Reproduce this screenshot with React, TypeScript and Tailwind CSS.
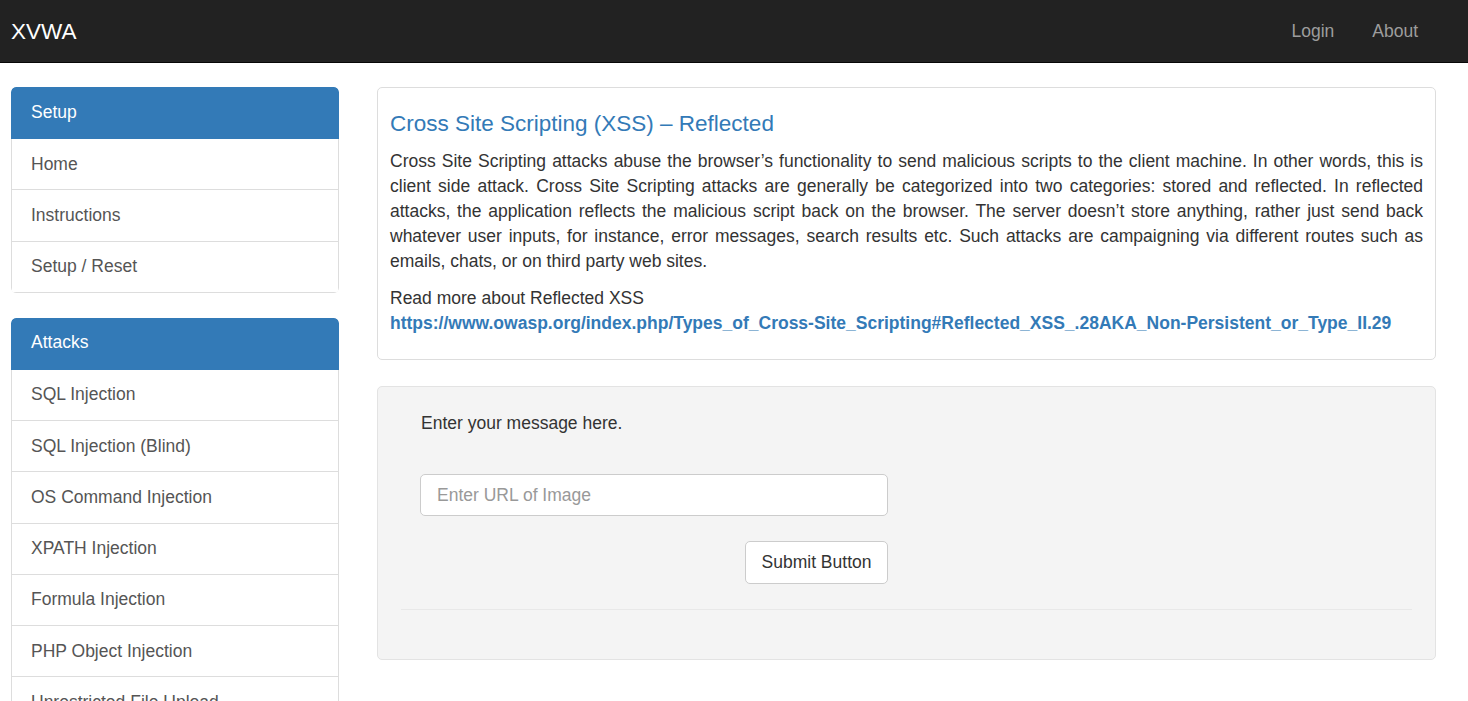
import React from "react";

const setupItems = ["Home", "Instructions", "Setup / Reset"];
const attackItems = [
  "SQL Injection",
  "SQL Injection (Blind)",
  "OS Command Injection",
  "XPATH Injection",
  "Formula Injection",
  "PHP Object Injection",
  "Unrestricted File Upload",
  "Reflected XSS",
];

function SidePanel({ title, items }: { title: string; items: string[] }) {
  return (
    <div className="rounded-[5px] overflow-hidden">
      <div className="h-[52px] bg-[#337ab7] text-white flex items-center pl-[20px] pb-[2px] text-[17.5px] rounded-t-[5px]">
        {title}
      </div>
      <div className="border-x border-[#dddddd] rounded-b-[5px]">
        {items.map((it) => (
          <div
            key={it}
            className="h-[51.25px] border-b border-[#dddddd] flex items-center pl-[19px] text-[#555555] text-[17.5px] bg-white"
          >
            {it}
          </div>
        ))}
      </div>
    </div>
  );
}

export default function App() {
  return (
    <div
      className="min-h-screen bg-white text-[#333333] text-[17.5px] leading-[25px]"
      style={{ fontFamily: '"Liberation Sans", Arial, Helvetica, sans-serif' }}
    >
      <nav className="h-[63px] bg-[#222222] border-b border-[#080808] flex items-center justify-between pl-[11px] pr-[50px]">
        <span className="text-white text-[22.5px] leading-[25px]">XVWA</span>
        <div className="flex gap-[38px] text-[#9d9d9d] text-[17.5px]">
          <span>Login</span>
          <span>About</span>
        </div>
      </nav>

      <div className="flex pl-[11px] pt-[24px]">
        <div className="w-[328px] flex flex-col gap-[25px]">
          <SidePanel title="Setup" items={setupItems} />
          <SidePanel title="Attacks" items={attackItems} />
        </div>

        <div className="w-[1059px] ml-[38px] flex flex-col gap-[26px]">
          <div className="border border-[#dddddd] rounded-[5px] bg-white px-[12px] pt-[23px] h-[273px]">
            <h3 className="text-[#337ab7] text-[22.5px] leading-[25px]">
              Cross Site Scripting (XSS) – Reflected
            </h3>
            <p className="mt-[13px] text-justify">
              Cross Site Scripting attacks abuse the browser’s functionality to send malicious scripts to the client machine. In other words, this is client side attack. Cross Site Scripting attacks are generally be categorized into two categories: stored and reflected. In reflected attacks, the application reflects the malicious script back on the browser. The server doesn’t store anything, rather just send back whatever user inputs, for instance, error messages, search results etc. Such attacks are campaigning via different routes such as emails, chats, or on third party web sites.
            </p>
            <p className="mt-[12px]">Read more about Reflected XSS</p>
            <p className="font-bold text-[#337ab7]">
              https://www.owasp.org/index.php/Types_of_Cross-Site_Scripting#Reflected_XSS_.28AKA_Non-Persistent_or_Type_II.29
            </p>
          </div>

          <div className="border border-[#e3e3e3] bg-[#f4f4f4] rounded-[5px] h-[274px] px-[23px] pt-[24px]">
            <div className="pl-[19px]">
              <p className="pl-[1px]">Enter your message here.</p>
              <input
                type="text"
                placeholder="Enter URL of Image"
                className="mt-[38px] block w-[468px] h-[42px] bg-white border border-[#cccccc] rounded-[5px] px-[16px] text-[17.5px] text-[#555555] placeholder:text-[#999999] outline-none"
              />
              <button className="mt-[25px] ml-[325px] block w-[143px] h-[43px] bg-white border border-[#cccccc] rounded-[5px] text-[17.5px] text-[#333333]">
                Submit Button
              </button>
            </div>
            <div className="mt-[25px] border-t border-[#e8e8e8]" />
          </div>
        </div>
      </div>
    </div>
  );
}
